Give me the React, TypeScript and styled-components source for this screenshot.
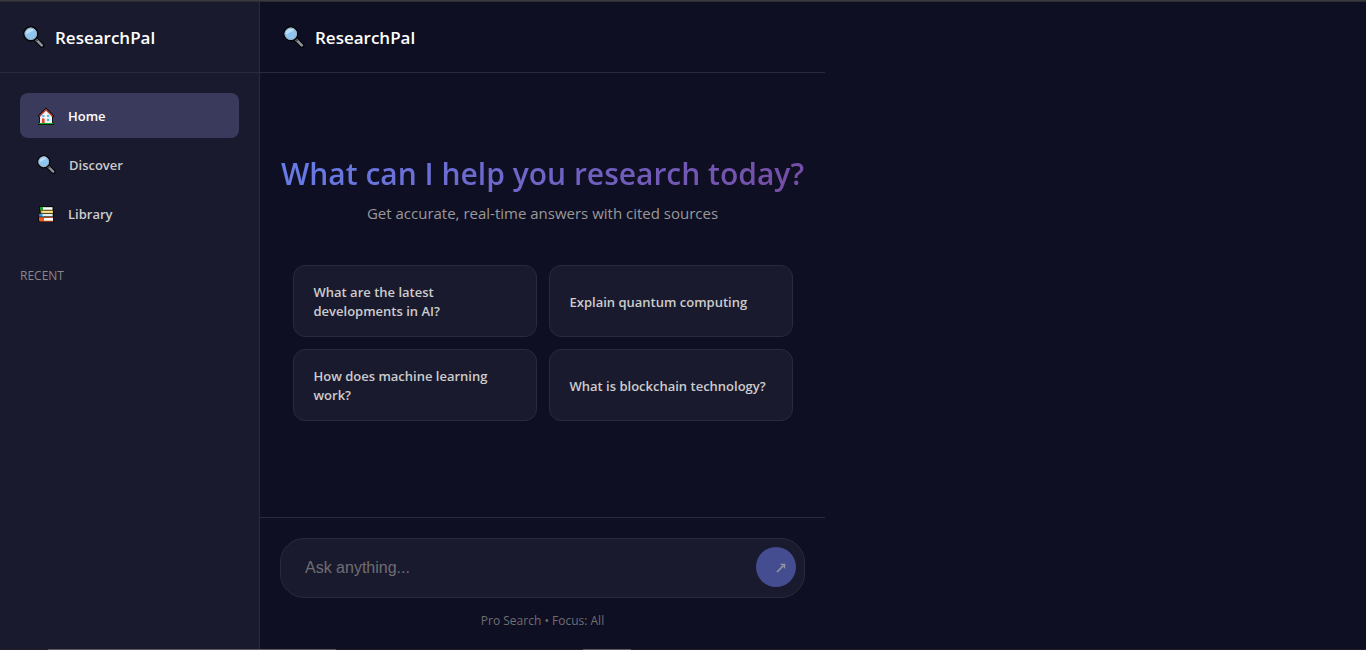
import React, { useState } from "react";
import styled, { createGlobalStyle } from "styled-components";

const color = {
  page: "#0f0f23",
  panel: "#1a1a2e",
  line: "#2a2a3e",
  active: "#3a3a5c",
  text: "#cccccc",
  soft: "#999999",
  muted: "#888888",
  faint: "#6e6e72",
};

const GlobalStyle = createGlobalStyle`
  *, *::before, *::after { box-sizing: border-box; }
  body {
    margin: 0;
    background: ${color.page};
    color: #ffffff;
    font-family: "Segoe UI", "Open Sans", "Noto Sans", sans-serif;
  }
  button, input { font: inherit; }
`;

const Page = styled.div`
  display: flex;
  flex-direction: column;
  min-height: 100vh;
`;

const TopEdge = styled.div`
  height: 2px;
  background: linear-gradient(#39393c 50%, #2c2c34 50%);
`;

const BottomEdge = styled.div`
  display: flex;
  height: 1px;
  background: #221d26;
`;

const EdgeMark = styled.span<{ $start: number; $length: number }>`
  width: ${(p) => p.$length}px;
  margin-left: ${(p) => p.$start}px;
  background: #5b5963;
`;

const Shell = styled.div`
  display: flex;
  flex: 1;
`;

const Sidebar = styled.aside`
  flex: 0 0 260px;
  background: ${color.panel};
  border-right: 1px solid ${color.line};
`;

const Main = styled.main`
  display: flex;
  flex: 1;
  flex-direction: column;
  max-width: 565px;
`;

const Brand = styled.header`
  display: flex;
  align-items: center;
  gap: 10px;
  height: 71px;
  padding: 0 20px 0 23px;
  border-bottom: 1px solid ${color.line};
  font-size: 17px;
  font-weight: 600;
`;

const Nav = styled.nav`
  display: flex;
  flex-direction: column;
  gap: 4px;
  padding: 20px;
`;

const NavItem = styled.button<{ $active?: boolean }>`
  display: flex;
  align-items: center;
  gap: 13px;
  height: 45px;
  padding: 0 17px;
  border: 0;
  border-radius: 8px;
  background: ${(p) => (p.$active ? color.active : "transparent")};
  color: ${(p) => (p.$active ? "#ffffff" : color.text)};
  font-size: 13px;
  font-weight: 600;
  text-align: left;
  cursor: pointer;
`;

const SectionTitle = styled.h2`
  margin: 11px 20px;
  color: ${color.muted};
  font-size: 12px;
  font-weight: 400;
  line-height: 18px;
  text-transform: uppercase;
`;

const Welcome = styled.section`
  display: flex;
  flex: 1;
  flex-direction: column;
  align-items: center;
  justify-content: center;
  padding: 0 20px;
`;

const Title = styled.h1`
  margin: 0;
  background: linear-gradient(135deg, #667eea 0%, #764ba2 100%);
  background-clip: text;
  -webkit-background-clip: text;
  color: transparent;
  font-size: 30px;
  font-weight: 600;
  line-height: 50px;
  white-space: nowrap;
`;

const Subtitle = styled.p`
  margin: 0 0 38px;
  color: ${color.soft};
  font-size: 15px;
  line-height: 28px;
`;

const Suggestions = styled.div`
  display: grid;
  grid-template-columns: 1fr 1fr;
  gap: 12px;
  width: 100%;
  max-width: 500px;
  margin-bottom: 20px;
`;

const Suggestion = styled.button`
  min-height: 72px;
  padding: 17px 20px 15px;
  border: 1px solid ${color.line};
  border-radius: 12px;
  background: ${color.panel};
  color: ${color.text};
  font-size: 13px;
  font-weight: 600;
  line-height: 19px;
  text-align: left;
  cursor: pointer;
`;

const Composer = styled.form`
  padding: 20px 20px 19px;
  border-top: 1px solid ${color.line};
`;

const Field = styled.div`
  display: flex;
  align-items: center;
  height: 60px;
  padding: 0 8px 2px 24px;
  border: 1px solid ${color.line};
  border-radius: 24px;
  background: ${color.panel};
`;

const Query = styled.input`
  flex: 1;
  min-width: 0;
  padding: 2px 0 0;
  border: 0;
  outline: 0;
  background: transparent;
  color: #ffffff;
  font-family: Arial, "Liberation Sans", sans-serif;
  font-size: 16px;
  &::placeholder { color: ${color.faint}; opacity: 1; }
`;

const Send = styled.button`
  display: flex;
  align-items: center;
  justify-content: center;
  width: 40px;
  height: 40px;
  padding: 2px 0 0 10px;
  border: 0;
  border-radius: 50%;
  background: #434d8f;
  color: #9495a6;
`;

const Note = styled.p`
  margin: 13px 0 0;
  color: ${color.faint};
  font-size: 12px;
  line-height: 19px;
  text-align: center;
`;

function Magnifier({ size }: { size: number }) {
  return (
    <svg width={size} height={size} viewBox="0 0 22 22" aria-hidden="true">
      <path d="M12.5 13 19 19.5" stroke="#060609" strokeWidth="5" strokeLinecap="round" />
      <path d="M13 13.5 18.8 19.3" stroke="#8c959b" strokeWidth="2.6" strokeLinecap="round" />
      <path d="M12 12.5 14.5 15" stroke="#454c53" strokeWidth="2" />
      <circle cx="7.8" cy="7.8" r="7" fill="#8ec6f2" stroke="#060609" strokeWidth="1.5" />
      <path d="M2.4 9A5.6 5.6 0 0 1 11.8 3.8Z" fill="#b9def8" />
      <circle cx="7.8" cy="7.8" r="5.7" fill="none" stroke="#9aa9b5" strokeWidth="1" />
    </svg>
  );
}

function House() {
  return (
    <svg width="18" height="18" viewBox="0 0 18 18" aria-hidden="true">
      <path d="M9 .6.6 9l1.6 1.5V16H1v2h16v-2h-1.2v-5.5L17.4 9Z" fill="#08080b" />
      <path d="m9 3.6-6 6v6.6h12V9.600Z" fill="#f1f1f4" />
      <path d="M2.200 9.300 9 2.500l6.800 6.800" fill="none" stroke="#d9472f" strokeWidth="1.200" />
      <path d="M5.200 8h2.200v2H5.200zm4.800 0h2.200v2H10zm0 3.800h2.200v2.200H10z" fill="#43bdec" />
      <path d="M5 11.500h2.600V16H5z" fill="#df4930" />
      <path d="M1.600 16h14.800v1.200H1.600z" fill="#19a52a" />
    </svg>
  );
}

function Books() {
  return (
    <svg width="18" height="18" viewBox="0 0 18 18" aria-hidden="true">
      <path d="M3 1h13.500v5H17v5.500h-.5V17H2.800L1 15.500v-3L2 11V8l1-1.500L2 5V2Z" fill="#08080b" />
      <path d="M3 2h4v3.200H3z" fill="#17a62d" />
      <path d="M6 2.200h9.500v2.600H6z" fill="#fff" />
      <path d="M3.500 5.600H16V8.200H4Z" fill="#eab61d" />
      <path d="M5.500 6.400H15.500v1H5.500z" fill="#fff" />
      <path d="M2.200 8.700h4v2.900h-4z" fill="#3397dc" />
      <path d="M5.500 8.900h10.200v2.500H5.500z" fill="#e0effa" />
      <path d="M2 12.200h14v4.200H3l-1-1Z" fill="#ec5a22" />
      <path d="M7 13h9v2.700H7z" fill="#fff" />
    </svg>
  );
}

function Arrow() {
  return (
    <svg width="10" height="10" viewBox="0 0 10 10" aria-hidden="true">
      <path d="M1 9 7.500 2.500" fill="none" stroke="currentColor" strokeWidth="1.700" />
      <path d="M4 .8h5.200V6L7.700 4.500V2.300H5.500Z" fill="currentColor" />
    </svg>
  );
}

const navItems = [
  { label: "Home", icon: <House /> },
  { label: "Discover", icon: <Magnifier size={19} /> },
  { label: "Library", icon: <Books /> },
];

const suggestions = [
  "What are the latest developments in AI?",
  "Explain quantum computing",
  "How does machine learning work?",
  "What is blockchain technology?",
];

export default function App() {
  const [section, setSection] = useState("Home");
  const [query, setQuery] = useState("");

  return (
    <Page>
      <GlobalStyle />
      <TopEdge />
      <Shell>
        <Sidebar>
          <Brand>
            <Magnifier size={22} />
            <span>ResearchPal</span>
          </Brand>
          <Nav>
            {navItems.map(({ label, icon }) => (
              <NavItem
                key={label}
                type="button"
                $active={section === label}
                onClick={() => setSection(label)}
              >
                {icon}
                {label}
              </NavItem>
            ))}
          </Nav>
          <SectionTitle>Recent</SectionTitle>
        </Sidebar>
        <Main>
          <Brand>
            <Magnifier size={22} />
            <span>ResearchPal</span>
          </Brand>
          <Welcome>
            <Title>What can I help you research today?</Title>
            <Subtitle>Get accurate, real-time answers with cited sources</Subtitle>
            <Suggestions>
              {suggestions.map((text) => (
                <Suggestion key={text} type="button" onClick={() => setQuery(text)}>
                  {text}
                </Suggestion>
              ))}
            </Suggestions>
          </Welcome>
          <Composer onSubmit={(event) => event.preventDefault()}>
            <Field>
              <Query
                aria-label="Ask anything"
                placeholder="Ask anything..."
                value={query}
                onChange={(event) => setQuery(event.target.value)}
              />
              <Send type="submit" aria-label="Send">
                <Arrow />
              </Send>
            </Field>
            <Note>Pro Search • Focus: All</Note>
          </Composer>
        </Main>
      </Shell>
      <BottomEdge>
        <EdgeMark $start={48} $length={288} />
        <EdgeMark $start={247} $length={48} />
      </BottomEdge>
    </Page>
  );
}
